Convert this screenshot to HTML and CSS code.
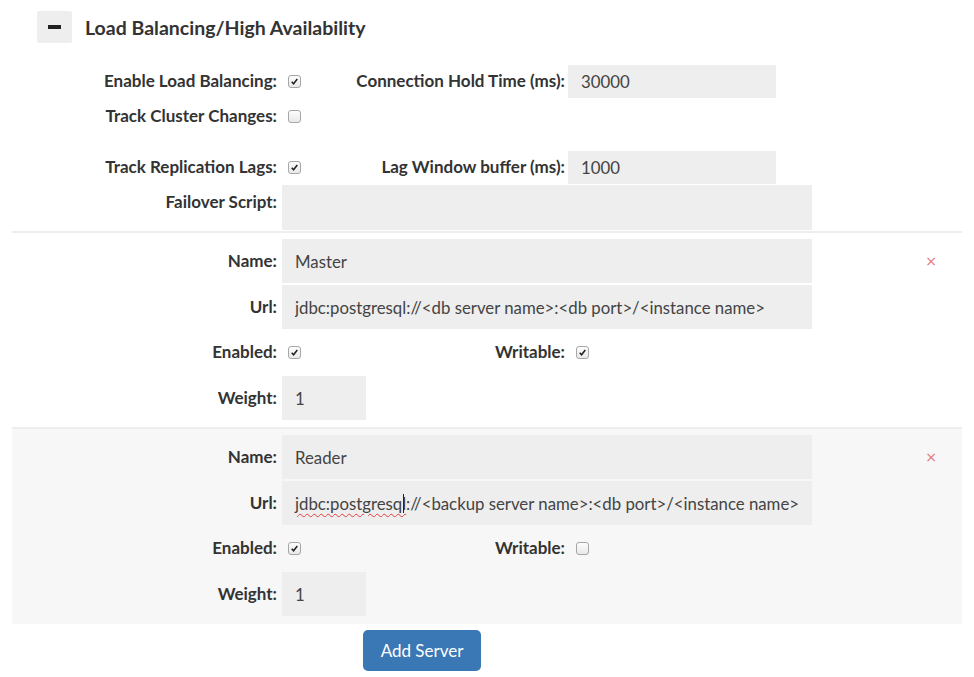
FILE: index.html
```html
<!DOCTYPE html>
<html lang="en">
<head>
    <meta charset="UTF-8">
    <meta name="viewport" content="width=device-width, initial-scale=1.0">
    <title>Load Balancing/High Availability</title>
    <link rel="stylesheet" href="styles.css">
</head>
<body>
    <div class="panel">
        <div class="panel-heading">
            <button class="toggle" aria-label="Collapse"><span class="minus"></span></button>
            <h2>Load Balancing/High Availability</h2>
        </div>

        <div class="settings">
            <div class="row">
                <label class="label">Enable Load Balancing:</label>
                <div class="cell"><span class="checkbox checked"><svg viewBox="0 0 13 13"><path d="M3.2 6.8 L5.4 9.2 L9.8 3.6" /></svg></span></div>
                <label class="label label-2">Connection Hold Time (ms):</label>
                <input class="field field-short" type="text" value="30000">
            </div>
            <div class="row row-2">
                <label class="label">Track Cluster Changes:</label>
                <div class="cell"><span class="checkbox"></span></div>
            </div>
            <div class="row row-3">
                <label class="label">Track Replication Lags:</label>
                <div class="cell"><span class="checkbox checked"><svg viewBox="0 0 13 13"><path d="M3.2 6.8 L5.4 9.2 L9.8 3.6" /></svg></span></div>
                <label class="label label-2">Lag Window buffer (ms):</label>
                <input class="field field-short" type="text" value="1000">
            </div>
            <div class="row row-top">
                <label class="label">Failover Script:</label>
                <input class="field field-wide field-tall" type="text" value="">
            </div>
        </div>

        <div class="server">
            <div class="row row-field">
                <label class="label">Name:</label>
                <input class="field field-wide" type="text" value="Master">
                <button class="remove" aria-label="Remove">&times;</button>
            </div>
            <div class="row row-field">
                <label class="label">Url:</label>
                <input class="field field-wide" type="text" value="jdbc:postgresql://<db server name>:<db port>/<instance name>">
            </div>
            <div class="row row-check">
                <label class="label">Enabled:</label>
                <div class="cell cell-wide"><span class="checkbox checked"><svg viewBox="0 0 13 13"><path d="M3.2 6.8 L5.4 9.2 L9.8 3.6" /></svg></span></div>
                <label class="label label-3">Writable:</label>
                <span class="checkbox checked checkbox-2"><svg viewBox="0 0 13 13"><path d="M3.2 6.8 L5.4 9.2 L9.8 3.6" /></svg></span>
            </div>
            <div class="row row-field">
                <label class="label">Weight:</label>
                <input class="field field-tiny" type="text" value="1">
            </div>
        </div>

        <div class="server alt">
            <div class="row row-field">
                <label class="label">Name:</label>
                <input class="field field-wide" type="text" value="Reader">
                <button class="remove" aria-label="Remove">&times;</button>
            </div>
            <div class="row row-field">
                <label class="label">Url:</label>
                <div class="field field-wide field-edit"><span class="misspelled">jdbc:postgresql</span><span class="caret"></span>://&lt;backup server name&gt;:&lt;db port&gt;/&lt;instance name&gt;</div>
            </div>
            <div class="row row-check">
                <label class="label">Enabled:</label>
                <div class="cell cell-wide"><span class="checkbox checked"><svg viewBox="0 0 13 13"><path d="M3.2 6.8 L5.4 9.2 L9.8 3.6" /></svg></span></div>
                <label class="label label-3">Writable:</label>
                <span class="checkbox checkbox-2"></span>
            </div>
            <div class="row row-field">
                <label class="label">Weight:</label>
                <input class="field field-tiny" type="text" value="1">
            </div>
        </div>

        <div class="actions">
            <button class="btn-primary">Add Server</button>
        </div>
    </div>
</body>
</html>
```

FILE: styles.css
```css
body {
    margin: 0;
    background-color: white;
    font-family: Lato, 'Open Sans', sans-serif;
    color: #333;
}
.panel {
    margin: 0 12px;
    padding-top: 11px;
}
.panel-heading {
    display: flex;
    align-items: center;
    padding-left: 25px;
}
.toggle {
    width: 35px;
    height: 32px;
    border: none;
    background-color: #eee;
    border-radius: 2px;
    padding: 0;
    display: flex;
    align-items: center;
    justify-content: center;
}
.minus {
    display: block;
    width: 13px;
    height: 4px;
    background-color: #222;
}
.panel-heading h2 {
    margin: 0 0 0 13px;
    font-size: 19.5px;
    font-weight: 700;
    color: #333;
}
.settings {
    margin-top: 22px;
    padding-bottom: 1px;
}
.row {
    display: flex;
    align-items: center;
}
.row-2 {
    height: 32px;
    margin-top: 2px;
}
.row-3 {
    margin-top: 19px;
}
.row-top {
    align-items: flex-start;
    margin-top: 1px;
}
.row-top .label {
    padding-top: 7px;
}
.label {
    width: 265px;
    margin-right: 5px;
    padding-bottom: 2px;
    text-align: right;
    white-space: nowrap;
    font-size: 17px;
    font-weight: 700;
    line-height: 19px;
    color: #333;
    flex-shrink: 0;
}
.label-2 {
    width: 210px;
    margin-right: 3px;
}
.label-3 {
    width: 83px;
    margin-right: 0;
}
.cell {
    width: 73px;
    display: flex;
    align-items: center;
}
.cell-wide {
    width: 200px;
}
.field {
    box-sizing: border-box;
    border: none;
    background-color: #eee;
    font-family: Lato, 'Open Sans', sans-serif;
    font-size: 16.8px;
    color: #444;
    padding: 0 13px;
    height: 32px;
    outline: none;
}
.field-short {
    width: 208px;
    height: 33px;
}
.field-wide {
    width: 530px;
    height: 44px;
}
.field-tall {
    height: 45px;
}
.field-tiny {
    width: 84px;
    height: 44px;
}
.field-edit {
    display: flex;
    align-items: center;
    white-space: nowrap;
}
.misspelled {
    text-decoration: underline wavy #e04040;
    text-decoration-thickness: 1px;
    text-underline-offset: 3px;
}
.caret {
    display: inline-block;
    width: 1px;
    height: 19px;
    margin-left: -3px;
    margin-right: 2px;
    background-color: #222;
}
.checkbox {
    box-sizing: border-box;
    display: inline-block;
    width: 13px;
    height: 13px;
    margin-left: 6px;
    border: 1px solid #a6a6a6;
    border-radius: 3px;
    background: linear-gradient(#fdfdfd, #e9e9e9);
}
.checkbox svg {
    display: block;
    width: 11px;
    height: 11px;
}
.checkbox path {
    fill: none;
    stroke: #222;
    stroke-width: 1.8;
}
.checkbox-2 {
    margin-left: 11px;
}
.server {
    border-top: 2px solid #eee;
    padding: 6px 0 7px;
}
.server .row-field + .row-field {
    margin-top: 2px;
}
.row-check {
    height: 47px;
}
.server .row-check + .row-field {
    margin-top: 0;
}
.alt {
    background-color: #f7f7f7;
    padding-bottom: 8px;
}
.remove {
    margin-left: auto;
    margin-right: 21px;
    border: none;
    background: none;
    padding: 0 4px;
    font-family: 'DejaVu Sans', sans-serif;
    font-size: 14px;
    color: #e2787a;
    line-height: 1;
    cursor: pointer;
}
.actions {
    padding: 6px 0 0 351px;
}
.btn-primary {
    width: 118px;
    height: 41px;
    border: none;
    border-radius: 5px;
    background-color: #3a77b5;
    color: white;
    font-family: Lato, 'Open Sans', sans-serif;
    font-size: 17px;
    cursor: pointer;
}
```
